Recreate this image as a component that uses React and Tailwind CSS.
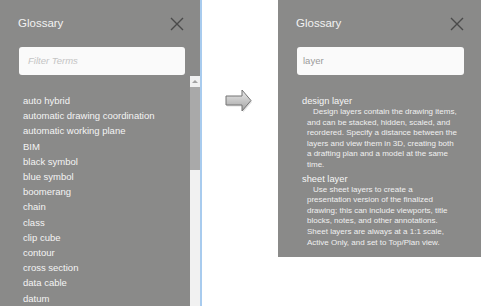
const TERMS = [
  'auto hybrid',
  'automatic drawing coordination',
  'automatic working plane',
  'BIM',
  'black symbol',
  'blue symbol',
  'boomerang',
  'chain',
  'class',
  'clip cube',
  'contour',
  'cross section',
  'data cable',
  'datum',
];

const RESULTS = [
  {
    term: 'design layer',
    text: 'Design layers contain the drawing items, and can be stacked, hidden, scaled, and reordered. Specify a distance between the layers and view them in 3D, creating both a drafting plan and a model at the same time.',
  },
  {
    term: 'sheet layer',
    text: 'Use sheet layers to create a presentation version of the finalized drawing; this can include viewports, title blocks, notes, and other annotations. Sheet layers are always at a 1:1 scale, Active Only, and set to Top/Plan view.',
  },
];

function CloseIcon() {
  return (
    <svg width="14" height="14" viewBox="0 0 14 14" className="text-[#4a4a4a]">
      <path d="M1 1L13 13M13 1L1 13" stroke="currentColor" strokeWidth="1.4" fill="none" />
    </svg>
  );
}

function Header() {
  return (
    <div className="flex items-center justify-between h-[47px] pl-[18px]">
      <span className="text-[11.5px] text-[#f2f2f2]">Glossary</span>
      <CloseIcon />
    </div>
  );
}

export default function App() {
  return (
    <div
      className="w-[481px] h-[306px] bg-white flex overflow-hidden"
      style={{ fontFamily: '"Liberation Sans", Arial, sans-serif' }}
    >
      {/* before: full list */}
      <div className="w-[202px] h-[306px] flex flex-col bg-[#8a8a89] border-r-2 border-[#a8cbee]">
        <div className="pr-[16px]">
          <Header />
        </div>
        <div className="pl-[19px] pr-[15px]">
          <div className="h-[28px] bg-[#fafafa] rounded-[3px] flex items-center px-[9px]">
            <span className="text-[9.5px] italic text-[#c4c4c4]">Filter Terms</span>
          </div>
        </div>
        <div className="flex flex-1 mt-[1px]">
          <ul className="flex-1 pt-[17px] pl-[23px]">
            {TERMS.map((t) => (
              <li key={t} className="text-[9.5px] leading-[15.2px] text-[#f4f4f4]">
                {t}
              </li>
            ))}
          </ul>
          <div className="w-[10px] bg-[#f1f1f1] flex flex-col items-center">
            <div className="h-[11px] flex items-center justify-center">
              <div className="w-0 h-0 border-l-[3px] border-r-[3px] border-b-[3px] border-l-transparent border-r-transparent border-b-[#a3a3a3]" />
            </div>
            <div className="w-full h-[83px] bg-[#a9a9a9]" />
          </div>
        </div>
      </div>

      {/* arrow */}
      <div className="w-[76px] flex justify-center pt-[87px] pr-[4px]">
        <svg width="32" height="28" viewBox="0 0 32 28">
          <defs>
            <linearGradient id="ag" x1="0" y1="0" x2="0" y2="1">
              <stop offset="0" stopColor="#ececec" />
              <stop offset="1" stopColor="#a2a2a2" />
            </linearGradient>
          </defs>
          <path d="M4 9H20V3L29 13.5L20 24V18H4Z" fill="#000" opacity="0.12" transform="translate(1 1.5)" />
          <path d="M4 9H20V3L29 13.5L20 24V18H4Z" fill="url(#ag)" stroke="#747474" strokeWidth="1" strokeLinejoin="round" />
        </svg>
      </div>

      {/* after: filtered */}
      <div className="w-[203px] h-[257px] bg-[#8a8a89] flex flex-col">
        <div className="pr-[17px]">
          <Header />
        </div>
        <div className="pl-[19px] pr-[17px]">
          <div className="h-[28px] bg-[#fafafa] rounded-[3px] flex items-center px-[6px]">
            <span className="text-[9.5px] text-[#9a9a9a]">layer</span>
          </div>
        </div>
        <div className="pl-[24px] pr-[23px] pt-[20px]">
          {RESULTS.map((r) => (
            <div key={r.term} className="mb-[2px]">
              <div className="text-[9.3px] leading-[12px] text-[#f6f6f6]">{r.term}</div>
              <p className="pl-[5px] indent-[6px] text-[8px] leading-[10.6px] text-[#f0f0f0]">
                {r.text}
              </p>
            </div>
          ))}
        </div>
      </div>
    </div>
  );
}
